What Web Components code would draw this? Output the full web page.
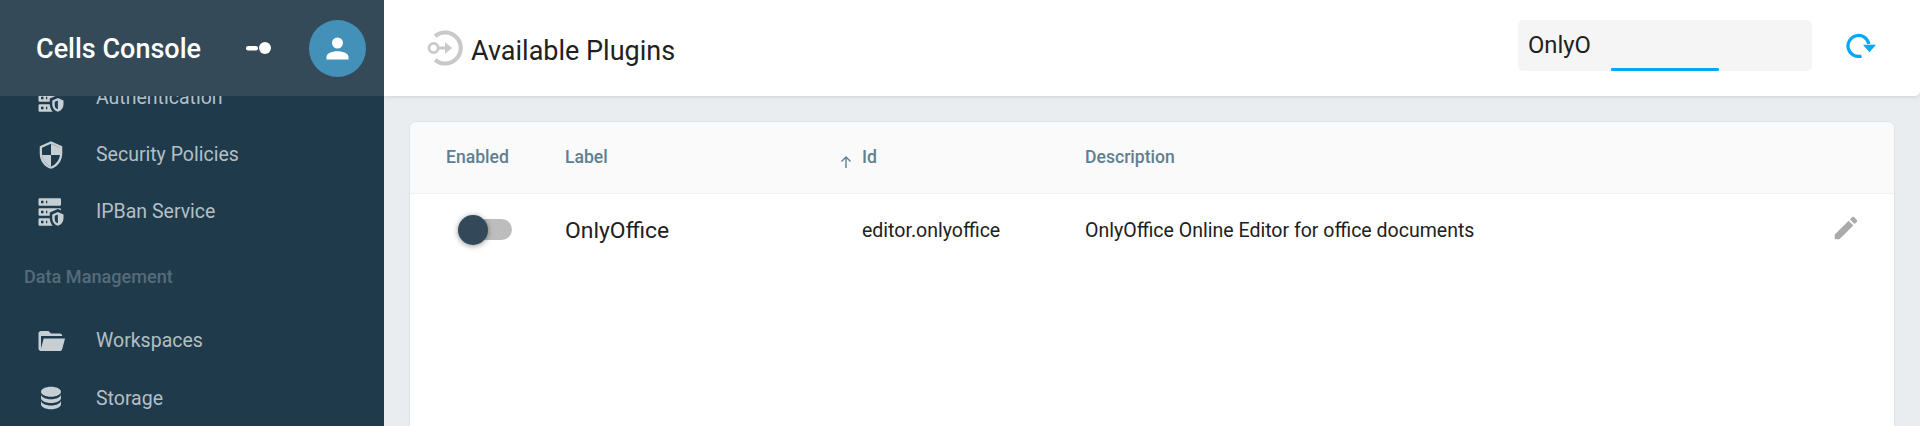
<!DOCTYPE html>
<html><head><meta charset="utf-8"><title>Cells Console</title>
<style>html,body{margin:0;height:100%;overflow:hidden;font-family:Roboto,sans-serif}</style></head>
<body>
<cells-app>
  <side-nav slot="nav">
    <nav-item icon="server">Authentication</nav-item>
    <nav-item icon="shield">Security Policies</nav-item>
    <nav-item icon="server">IPBan Service</nav-item>
    <nav-heading>Data Management</nav-heading>
    <nav-item icon="folder">Workspaces</nav-item>
    <nav-item icon="database">Storage</nav-item>
  </side-nav>
  <app-bar slot="bar" heading="Available Plugins" query="OnlyO"></app-bar>
  <plugin-table slot="main">
    <plugin-row name="OnlyOffice" pid="editor.onlyoffice" desc="OnlyOffice Online Editor for office documents"></plugin-row>
  </plugin-table>
</cells-app>
<script>
const P={
server:'<path d="M3,1H19A1,1 0 0,1 20,2V6A1,1 0 0,1 19,7H3A1,1 0 0,1 2,6V2A1,1 0 0,1 3,1M3,9H19A1,1 0 0,1 20,10V10.67L17.5,9.56L11,12.44V15H3A1,1 0 0,1 2,14V10A1,1 0 0,1 3,9M3,17H11C11.06,19.25 11.94,21.4 13.38,23H3A1,1 0 0,1 2,22V18A1,1 0 0,1 3,17M8,5H9V3H8V5M8,13H9V11H8V13M8,21H9V19H8V21M4,3V5H6V3H4M4,11V13H6V11H4M4,19V21H6V19H4M17.5,12L22,14V17C22,19.78 20.08,22.37 17.5,23C14.92,22.37 13,19.78 13,17V14L17.5,12M17.5,13.94L15,15.06V17.72C15,19.26 16.07,20.7 17.5,21.06V13.94Z"/>',
shield:'<path fill-rule="evenodd" d="M21,11C21,16.55 17.16,21.74 12,23C6.84,21.74 3,16.55 3,11V5L12,1L21,5V11M12,21.2C15.75,20 19.2,15.54 19.2,11.22V6.2L12,3L4.8,6.2V11.22C4.8,15.54 8.25,20 12,21.2Z"/><path d="M12,3L19.2,6.2V12H12ZM4.8,12H12V21.2C8.25,20 4.8,15.54 4.8,12Z"/>',
folder:'<path d="M19,20H4C2.89,20 2,19.1 2,18V6C2,4.89 2.89,4 4,4H10L12,6H19A2,2 0 0,1 21,8H21L4,8V18L6.14,10H23.21L20.93,18.5C20.7,19.37 19.92,20 19,20Z"/>',
database:'<path d="M12,3C7.58,3 4,4.79 4,7C4,9.21 7.58,11 12,11C16.42,11 20,9.21 20,7C20,4.79 16.42,3 12,3M4,9V12C4,14.21 7.58,16 12,16C16.42,16 20,14.21 20,12V9C20,11.21 16.42,13 12,13C7.58,13 4,11.21 4,9M4,14V17C4,19.21 7.58,21 12,21C16.42,21 20,19.21 20,17V14C20,16.21 16.42,18 12,18C7.58,18 4,16.21 4,14Z"/>',
account:'<path d="M12,4A4,4 0 0,1 16,8A4,4 0 0,1 12,12A4,4 0 0,1 8,8A4,4 0 0,1 12,4M12,14C16.42,14 20,15.79 20,18V20H4V18C4,15.79 7.58,14 12,14Z"/>',
pencil:'<path d="M20.71,7.04C21.1,6.65 21.1,6 20.71,5.63L18.37,3.29C18,2.9 17.35,2.9 16.96,3.29L15.12,5.12L18.87,8.87M3,17.25V21H6.75L17.81,9.93L14.06,6.18L3,17.25Z"/>'
};
function def(name,html){customElements.define(name,class extends HTMLElement{
  constructor(){super();this.attachShadow({mode:'open'})}
  connectedCallback(){this.shadowRoot.innerHTML=html(this);}
});}
const svg=(n,s)=>`<svg width="${s}" height="${s}" viewBox="0 0 24 24" fill="currentColor" style="display:block;flex:none">${P[n]}</svg>`;

def('cells-app',()=>`<style>
:host{display:grid;grid-template-columns:384px 1fr;grid-template-rows:96px 1fr;height:426px;overflow:hidden;background:#eaedf0}
.n{grid-row:1/3;display:block;min-height:0}
.b{display:block}.m{display:block;min-height:0}
::slotted([slot=nav]){height:426px}
</style><slot class="n" name="nav"></slot><slot class="b" name="bar"></slot><slot class="m" name="main"></slot>`);

def('side-nav',()=>`<style>
:host{display:flex;flex-direction:column;background:#1f3b4b;overflow:hidden;position:relative}
header{flex:none;height:96px;background:#354a59;display:flex;align-items:center;position:relative;z-index:1;box-sizing:border-box;padding:0 0 0 36px;color:#fff}
h1{margin:0;font:500 27px/1 Roboto,sans-serif;flex:1;position:relative;top:1px;white-space:nowrap}
.t{margin-right:37px;display:block;flex:none}
.a{width:57px;height:57px;border-radius:50%;background:#4390b8;display:flex;align-items:center;justify-content:center;margin-right:18px;flex:none}
.l{margin-top:-27px;display:flex;flex-direction:column}
</style><header><h1>Cells Console</h1>
<svg class="t" width="27" height="14" viewBox="0 0 27 14" fill="#fff"><rect x="1" y="5" width="12" height="4.4" rx="2"/><circle cx="20" cy="7" r="6"/></svg>
<div class="a">${svg('account',33)}</div></header><div class="l"><slot></slot></div>`);

def('nav-item',h=>`<style>
:host{display:flex;align-items:center;height:57.2px;padding-left:36px;gap:30px;color:#c5cfd4;flex:none}
span{font:400 19.5px/1 Roboto,sans-serif;color:#b4bfc5;white-space:nowrap}
</style>${svg(h.getAttribute('icon'),30)}<span><slot></slot></span>`);

def('nav-heading',()=>`<style>
:host{display:block;height:72px;box-sizing:border-box;padding:26px 0 0 24px;font:500 18.1px/20px Roboto,sans-serif;color:#566b7a;white-space:nowrap;flex:none}
</style><slot></slot>`);

def('app-bar',h=>`<style>
:host{display:flex;align-items:center;height:96px;background:#fff;border-bottom-right-radius:5px;box-shadow:0 1px 4px rgba(0,0,0,.12);box-sizing:border-box;position:relative}
.ic{margin-left:43px;flex:none;display:block;position:relative}
h2{margin:0 0 0 8px;font:400 27px/1 Roboto,sans-serif;color:#212121;flex:1;position:relative;top:3px;white-space:nowrap}
.s{width:294px;height:51px;background:#f5f5f5;border-radius:5px;box-sizing:border-box;padding:0 10px;display:flex;align-items:center;position:relative;font:400 23.8px/1 Roboto,sans-serif;color:#212121;margin:-6px 0 0}
.s span{position:relative;top:1px}
.u{position:absolute;left:93px;bottom:0;width:108px;height:3px;background:#03a9f4;border-radius:1px}
.r{margin:0 42px 0 34px;flex:none;display:block;position:relative;top:-2px}
</style>
<svg class="ic" width="36" height="36" viewBox="0 0 36 36" fill="none" stroke="#c9c9c9"><path d="M8.2 6.2A15.5 15.5 0 1 1 8.2 29.8" stroke-width="4.2"/><circle cx="6.6" cy="18" r="4.6" stroke-width="2.8"/><path d="M11.5 18H21" stroke-width="3"/><path d="M18 12.2L25 18L18 23.8Z" fill="#c9c9c9" stroke="none"/></svg>
<h2>${h.getAttribute('heading')}</h2>
<div class="s"><span>${h.getAttribute('query')}</span><i class="u"></i></div>
<svg class="r" width="32" height="28" viewBox="0 0 32 28" fill="none"><path d="M15.5 24A10.5 10.5 0 1 1 22.8 12" stroke="#03a9f4" stroke-width="3.2"/><path d="M17 12.7H30L23.5 20.3Z" fill="#03a9f4"/></svg>`);

def('plugin-table',()=>`<style>
:host{display:block;margin:25px 25px 0;background:#fff;border:1px solid #e1e4e7;border-bottom:0;border-radius:7px 7px 0 0;height:400px;overflow:hidden;box-sizing:border-box;font-family:Roboto,sans-serif}
.h{display:grid;grid-template-columns:119px 297px 223px 1fr;height:71px;background:#fafafa;border-bottom:1px solid #f1f1f1;align-items:center;padding-left:36px;font:500 17.6px/1 Roboto,sans-serif;color:#5f7f90}
.h span{position:relative;display:flex;align-items:center}
.a{margin-left:-24px;margin-right:8px;position:relative;top:4px}
</style><div class="h"><span>Enabled</span><span>Label</span><span><svg class="a" width="16" height="16" viewBox="0 0 16 16" fill="none" stroke="#5f7f90" stroke-width="1.4"><path d="M8 14V3M3.5 7.5L8 3L12.5 7.5"/></svg>Id</span><span>Description</span></div><slot></slot>`);

def('plugin-row',h=>`<style>
:host{display:grid;grid-template-columns:120px 297px 223px 1fr 60px;height:74px;align-items:center;padding-left:35px;font:400 19.55px/1 Roboto,sans-serif;color:#212121}
.n{font-size:22.9px}
.e{color:#aaa;position:relative;top:-3px;margin-left:-3px}
.p{white-space:nowrap}
toggle-switch{position:relative;top:-1px}
</style><toggle-switch></toggle-switch><span class="n">${h.getAttribute('name')}</span><span class="p">${h.getAttribute('pid')}</span><span class="p">${h.getAttribute('desc')}</span><span class="e">${svg('pencil',30)}</span>`);

def('toggle-switch',()=>`<style>
:host{display:block;width:54px;height:30px;margin-left:13px}
.w{position:relative;width:54px;height:30px}
.t{position:absolute;left:5px;right:0;top:4px;height:21px;border-radius:11px;background:#bdbdbd}
.k{position:absolute;left:0;top:0;width:30px;height:30px;border-radius:50%;background:#33495a;box-shadow:0 1px 6px rgba(0,0,0,.25),0 1px 4px rgba(0,0,0,.2)}
</style><div class="w"><div class="t"></div><div class="k"></div></div>`);
</script>
</body></html>
